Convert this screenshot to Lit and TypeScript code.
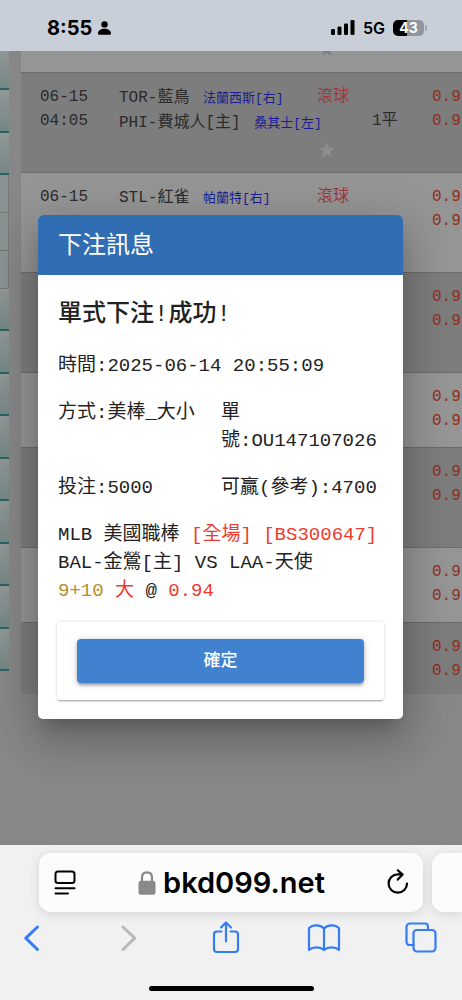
import { LitElement, html, css, nothing } from "lit";
import { customElement } from "lit/decorators.js";

interface Game {
  size: "tall" | "short" | "last";
  date?: string;
  time?: string;
  away?: string;
  awayPitcher?: string;
  home?: string;
  homePitcher?: string;
  live?: boolean;
  line?: string;
}

const GAMES: Game[] = [
  { size: "tall", date: "06-15", time: "04:05", away: "TOR-藍鳥", awayPitcher: "法蘭西斯[右]", home: "PHI-費城人[主]", homePitcher: "桑其士[左]", live: true, line: "1平" },
  { size: "tall", date: "06-15", away: "STL-紅雀", awayPitcher: "帕蘭特[右]", live: true },
  { size: "tall" },
  { size: "short" },
  { size: "tall" },
  { size: "short" },
  { size: "last" },
];

const star = html`<svg class="star" viewBox="0 0 16 16" aria-hidden="true">
  <path d="M8 0l1.9 5.6 6.1.1-4.9 3.7 1.8 5.9L8 11.9l-4.9 3.4 1.8-5.9L0 5.7l6.1-.1z" />
</svg>`;

@customElement("status-bar")
class StatusBar extends LitElement {
  static styles = css`
    :host {
      display: flex;
      justify-content: space-between;
      align-items: center;
      height: 51px;
      padding: 4px 35px 0 47px;
      box-sizing: border-box;
      background: #c9cfd8;
      color: #000;
      font-family: Inter, sans-serif;
    }
    .group { display: flex; align-items: center; gap: 6px; }
    .time { font-size: 20px; font-weight: 700; line-height: 24px; }
    .net { font-size: 16px; font-weight: 600; line-height: 20px; }
    .right { gap: 8px; }
    .battery {
      width: 31px;
      height: 16px;
      border-radius: 5px;
      background: linear-gradient(to right, #000 14px, #90959e 14px);
      color: #fff;
      font-size: 14px;
      font-weight: 700;
      line-height: 16px;
      text-align: center;
    }
    .cell { display: flex; align-items: center; gap: 1px; }
    .nub { width: 2px; height: 6px; border-radius: 0 2px 2px 0; background: #a0a5ae; }
  `;
  render() {
    return html`
      <div class="group">
        <span class="time">8:55</span>
        <svg width="13" height="14" viewBox="0 0 13 14" aria-hidden="true">
          <circle cx="6.5" cy="3.4" r="3.2" />
          <path d="M0 12.4C0 9.6 3 7.8 6.5 7.8S13 9.6 13 12.4c0 .9-.5 1.4-1.4 1.4H1.4C.5 13.8 0 13.3 0 12.4z" />
        </svg>
      </div>
      <div class="group right">
        <svg width="24" height="15" viewBox="0 0 24 15" aria-hidden="true">
          <rect x="0" y="9" width="4" height="6" rx="1.3" />
          <rect x="6.5" y="6.5" width="4" height="8.5" rx="1.3" />
          <rect x="13" y="3.5" width="4" height="11.5" rx="1.3" />
          <rect x="19.5" y="0" width="4" height="15" rx="1.3" />
        </svg>
        <span class="net">5G</span>
        <span class="cell"><span class="battery">43</span><span class="nub"></span></span>
      </div>
    `;
  }
}

@customElement("odds-board")
class OddsBoard extends LitElement {
  static styles = css`
    :host {
      display: flex;
      align-items: flex-start;
      gap: 12px;
      overflow: hidden;
      background: #878787;
      font-family: "Liberation Mono", "Noto Sans CJK TC", monospace;
      font-size: 16px;
      line-height: 24px;
      color: #2b2b2b;
    }
    .rail { flex: none; width: 9px; margin-top: -3px; }
    .tabs { display: flex; flex-direction: column; height: 127px; }
    .more { height: 382px; }
    .tab {
      flex: 1;
      border-bottom: 2px solid #2a6264;
      background: linear-gradient(#929797, #748785);
    }
    .slot {
      height: 38px;
      box-sizing: border-box;
      border-right: 1px solid #777;
      border-bottom: 1px solid #777;
      background: #8b9392;
    }
    .board { flex: none; width: 640px; border-collapse: collapse; table-layout: fixed; }
    .row { background: #959595; border-bottom: 1px solid #6c6c6c; }
    .row:nth-child(even) { background: #7d7d7d; }
    .row:last-child { border-bottom: 0; }
    .top { height: 21px; }
    .tall { height: 100px; }
    .short { height: 75px; }
    .last { height: 72px; }
    .cell { padding: 12px 0 0; vertical-align: top; text-align: left; font-weight: 400; white-space: nowrap; }
    .top .cell { padding: 0; line-height: 0; }
    .date { width: 98px; padding-left: 19px; box-sizing: border-box; }
    .teams { width: 198px; }
    .row .teams { padding-top: 13px; }
    .live { width: 55px; color: #9a3a3c; }
    .line { width: 60px; }
    .odds { color: #8e2e20; }
    .team { line-height: 25px; }
    .pitcher { font-size: 13px; color: #1c1c96; margin-left: 4px; }
    .handicap { padding-top: 24px; }
    .star { display: block; width: 16px; height: 16px; margin: 33px 0 0 2px; fill: #8f8f8f; }
    .top .star { margin: -10px 0 0 2px; fill: #808080; }
  `;
  render() {
    const tab = html`<div class="tab"></div>`;
    const slot = html`<div class="slot"></div>`;
    return html`
      <div class="rail">
        <div class="tabs">${[0, 1, 2].map(() => tab)}</div>
        ${[0, 1, 2].map(() => slot)}
        <div class="tabs more">${[0, 1, 2, 3, 4, 5, 6, 7, 8].map(() => tab)}</div>
      </div>
      <table class="board">
        <colgroup>
          <col class="date" /><col class="teams" /><col class="live" /><col class="line" /><col />
        </colgroup>
        <tbody>
          <tr class="row top">
            <td class="cell"></td><td class="cell"></td>
            <td class="cell">${star}</td>
            <td class="cell"></td><td class="cell"></td>
          </tr>
          ${GAMES.map(
            (g) => html`<tr class="row ${g.size}">
              <td class="cell date"><div>${g.date}</div><div>${g.time}</div></td>
              <td class="cell teams">
                ${g.away ? html`<div class="team">${g.away} <span class="pitcher">${g.awayPitcher}</span></div>` : nothing}
                ${g.home ? html`<div class="team">${g.home} <span class="pitcher">${g.homePitcher}</span></div>` : nothing}
              </td>
              <td class="cell live">${g.live ? html`<div>滾球</div>${star}` : nothing}</td>
              <td class="cell line">${g.line ? html`<div class="handicap">${g.line}</div>` : nothing}</td>
              <td class="cell odds"><div>0.9</div><div>0.9</div></td>
            </tr>`
          )}
        </tbody>
      </table>
    `;
  }
}

@customElement("bet-dialog")
class BetDialog extends LitElement {
  static styles = css`
    :host {
      display: block;
      font-family: "Liberation Mono", "Noto Sans CJK TC", monospace;
      font-size: 19px;
      line-height: 28px;
      color: #222;
    }
    .dialog {
      border-radius: 5px;
      background: #fff;
      overflow: hidden;
      box-shadow: 0 11px 15px -7px rgba(0, 0, 0, 0.2), 0 24px 38px 3px rgba(0, 0, 0, 0.14), 0 9px 46px 8px rgba(0, 0, 0, 0.12);
    }
    .title {
      margin: 0;
      padding: 14px 20px 10px;
      background: #316db3;
      color: #fff;
      font-size: 24px;
      font-weight: 400;
      line-height: 36px;
    }
    .body { display: flex; flex-direction: column; gap: 19px; padding: 22px 19px 17px 20px; }
    .result { margin: 0; font-size: 24px; font-weight: 500; line-height: 36px; }
    .pair { display: grid; grid-template-columns: 1fr 1fr; }
    .text { margin: 0; }
    .wide { white-space: nowrap; }
    .red { color: #ee3a2e; }
    .gold { color: #b58c2c; }
    .actions {
      display: flex;
      margin: 0 19px 19px;
      padding: 17px 20px;
      border-radius: 3px;
      box-shadow: 0 2px 2px -1px rgba(0, 0, 0, 0.35), 0 0 3px rgba(0, 0, 0, 0.18);
    }
    .ok {
      flex: 1;
      height: 44px;
      border: 0;
      border-radius: 4px;
      background: #4082d0;
      color: #fff;
      font-family: "Noto Sans CJK TC", sans-serif;
      font-size: 17px;
      font-weight: 500;
      line-height: 24px;
      padding: 0 0 4px;
      box-shadow: 0 3px 3px -1px rgba(0, 0, 0, 0.3), 0 1px 6px rgba(0, 0, 0, 0.25);
    }
  `;
  render() {
    return html`
      <section class="dialog" role="dialog" aria-labelledby="title">
        <h2 class="title" id="title">下注訊息</h2>
        <div class="body">
          <h3 class="result">單式下注!成功!</h3>
          <p class="text">時間:2025-06-14 20:55:09</p>
          <div class="pair"><span>方式:美棒_大小</span><span>單號:OU147107026</span></div>
          <div class="pair"><span>投注:5000</span><span>可贏(參考):4700</span></div>
          <p class="text wide">
            MLB 美國職棒 <span class="red">[全場] [BS300647]</span><br />
            BAL-金鶯[主] VS LAA-天使<br />
            <span class="gold">9+10</span> <span class="red">大</span> @ <span class="red">0.94</span>
          </p>
        </div>
        <div class="actions"><button class="ok" type="button">確定</button></div>
      </section>
    `;
  }
}

@customElement("browser-bar")
class BrowserBar extends LitElement {
  static styles = css`
    :host {
      display: flex;
      flex-direction: column;
      height: 155px;
      box-sizing: border-box;
      padding: 8px 0 9px;
      overflow: hidden;
      background: #f1f1f1;
      font-family: Inter, sans-serif;
    }
    .tabs { display: flex; gap: 9px; padding-left: 39px; }
    .address, .next {
      height: 59px;
      background: #fcfcfc;
      box-shadow: 0 2px 12px rgba(0, 0, 0, 0.12);
    }
    .address {
      flex: 1;
      display: flex;
      align-items: center;
      justify-content: space-between;
      box-sizing: border-box;
      padding: 0 14px 0 15px;
      border-radius: 12px;
    }
    .next { width: 30px; border-radius: 12px 0 0 12px; }
    .site { display: flex; align-items: center; gap: 7px; font-size: 29px; font-weight: 600; line-height: 34px; color: #000; }
    .tools { display: flex; justify-content: space-between; padding: 8px 24px 0 14px; }
    .tool { display: flex; justify-content: center; width: 34px; height: 36px; padding: 0; border: 0; background: none; color: #347bf6; }
    .page { width: 22px; height: 28px; color: #000; }
    .off { color: #b9b9b9; }
    .icon { flex: none; display: block; fill: none; stroke: currentColor; stroke-width: 2.2; stroke-linecap: round; stroke-linejoin: round; }
    .home { width: 165px; height: 5px; margin: auto auto 0; border-radius: 3px; background: #000; }
  `;
  render() {
    return html`
      <div class="tabs">
        <div class="address">
          <button class="tool page" type="button" aria-label="頁面選單">
            <svg class="icon" width="22" height="28" viewBox="0 0 22 28">
              <rect x="1.5" y="2.5" width="19" height="11.5" rx="2.5" stroke-width="2" />
              <path d="M1.5 19.3h19M1.5 24.6h12.5" stroke-width="2" />
            </svg>
          </button>
          <div class="site">
            <svg width="18" height="24" viewBox="0 0 18 24" aria-hidden="true">
              <path d="M4 11V6.5C4 3.2 6 1.3 9 1.3s5 1.9 5 5.2V11" fill="none" stroke="#89898b" stroke-width="2.2" />
              <rect x="0.5" y="9.8" width="17" height="14" rx="2.5" fill="#89898b" />
            </svg>
            <span>bkd099.net</span>
          </div>
          <button class="tool page" type="button" aria-label="重新載入">
            <svg class="icon" width="22" height="28" viewBox="0 0 22 28">
              <path d="M20 14.5A9.2 9.2 0 1 1 10.8 5.3H15M10.8 1.3L15.6 5.6 10.8 10.6" stroke-width="2.2" />
            </svg>
          </button>
        </div>
        <div class="next"></div>
      </div>
      <nav class="tools">
        <button class="tool" type="button" aria-label="上一頁">
          <svg class="icon" width="17" height="36" viewBox="0 0 17 36"><path d="M14.5 7L2.8 18.2 14.5 29.5" stroke-width="3" /></svg>
        </button>
        <button class="tool off" type="button" aria-label="下一頁">
          <svg class="icon" width="17" height="36" viewBox="0 0 17 36"><path d="M3 7l11.7 11.2L3 29.5" stroke-width="3" /></svg>
        </button>
        <button class="tool" type="button" aria-label="分享">
          <svg class="icon" width="28" height="36" viewBox="0 0 28 36">
            <path d="M9.5 11.5H5a3 3 0 0 0-3 3v14.500a3 3 0 0 0 3 3h18a3 3 0 0 0 3-3V14.500a3 3 0 0 0-3-3h-4.500M14 21.500V2.500M9 7.500l5-5 5 5" />
          </svg>
        </button>
        <button class="tool" type="button" aria-label="書籤">
          <svg class="icon" width="34" height="36" viewBox="0 0 34 36">
            <path d="M17 8.500C13.500 4.500 5.500 4.500 2 8.200V29.800C6 26.500 13 26.500 17 30 21 26.500 28 26.500 32 29.800V8.200C28.500 4.500 20.500 4.500 17 8.500zM17 8.500V30" />
          </svg>
        </button>
        <button class="tool" type="button" aria-label="分頁">
          <svg class="icon" width="32" height="36" viewBox="0 0 32 36">
            <path d="M8.500 25H4.500a3 3 0 0 1-3-3V7a3.500 3.500 0 0 1 3.500-3.500h15A3 3 0 0 1 23 6.500V10" />
            <rect x="8.500" y="10" width="22" height="21.500" rx="3.500" />
          </svg>
        </button>
      </nav>
      <div class="home"></div>
    `;
  }
}

@customElement("app-root")
class AppRoot extends LitElement {
  static styles = css`
    :host { display: flex; flex-direction: column; min-height: 100vh; overflow: hidden; }
    .stage { position: relative; flex: 1; display: grid; min-width: 0; overflow: hidden; }
    .board { min-width: 0; }
    .overlay { position: absolute; inset: 0; padding: 164px 59px 0 38px; }
  `;
  render() {
    return html`
      <status-bar></status-bar>
      <main class="stage">
        <odds-board class="board"></odds-board>
        <div class="overlay"><bet-dialog></bet-dialog></div>
      </main>
      <browser-bar></browser-bar>
    `;
  }
}
